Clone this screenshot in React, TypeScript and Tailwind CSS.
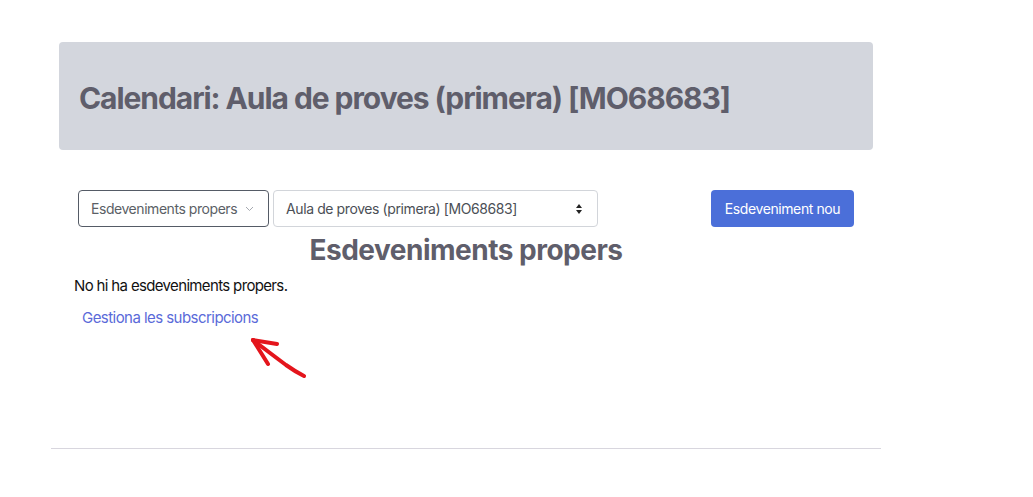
const font = { fontFamily: "Inter, 'Liberation Sans', sans-serif" };

const ArrowMark = () => (
  <svg width="70" height="50" viewBox="0 0 70 50" className="absolute left-[244px] top-[332px]">
    <g fill="none" stroke="#e4151c" strokeWidth="4" strokeLinecap="round" strokeLinejoin="round">
      <path d="M9 8 C 22 18, 34 27, 42 33 C 49 38, 54 41, 60 44" />
      <path d="M9 8 L 24 32" />
      <path d="M9 8 L 33 12" />
    </g>
  </svg>
);

export default function App() {
  return (
    <div className="relative h-[497px] w-[1033px] bg-white" style={font}>
      <div className="ml-[51px] w-[830px] pt-[42px]">
        <div className="mx-2 flex h-[108px] items-center rounded-sm bg-[#d3d6dd] px-5 pt-1">
          <h1 className="text-[30px] font-bold tracking-[-1.07px] text-[#5f5e6b]">
            Calendari: Aula de proves (primera) [MO68683]
          </h1>
        </div>

        <div className="mt-10 flex items-center px-[27px]">
          <button className="flex h-[37px] w-[191px] items-center justify-between rounded-[4px] border border-[#555b66] px-3 text-[14px] tracking-[-0.45px] text-[#5b5f66]">
            <span>Esdeveniments propers</span>
            <svg width="9" height="6" viewBox="0 0 9 6" className="mr-0.5">
              <path d="M1 1 L4.5 4.5 L8 1" fill="none" stroke="#a5a9b0" strokeWidth="1" />
            </svg>
          </button>
          <div className="ml-1 flex h-[37px] w-[325px] items-center justify-between rounded-[4px] border border-[#d2d5da] px-3 text-[14px] tracking-[-0.4px] text-[#4b4f56]">
            <span>Aula de proves (primera) [MO68683]</span>
            <svg width="8" height="12" viewBox="0 0 8 12" className="mr-0.5">
              <path d="M4 1 L7 5 H1 Z" fill="#222" />
              <path d="M4 11 L7 7 H1 Z" fill="#222" />
            </svg>
          </div>
          <button className="ml-auto h-[37px] w-[143px] rounded-[4px] bg-[#4b6fd9] text-[14px] tracking-[-0.4px] text-white">
            Esdeveniment nou
          </button>
        </div>

        <h2 className="mt-[5px] text-center text-[28px] font-bold leading-[36px] tracking-[-0.5px] text-[#5f5e6b]">
          Esdeveniments propers
        </h2>

        <p className="mt-[7px] pl-[23px] text-[15px] tracking-[-0.65px] text-[#111]">
          No hi ha esdeveniments propers.
        </p>
        <a className="mt-[9px] block pl-[31px] text-[15px] tracking-[-0.55px] text-[#5a6ad9]">
          Gestiona les subscripcions
        </a>

        <hr className="mt-[119px] border-t border-[#d8d6de]" />
      </div>
      <ArrowMark />
    </div>
  );
}
